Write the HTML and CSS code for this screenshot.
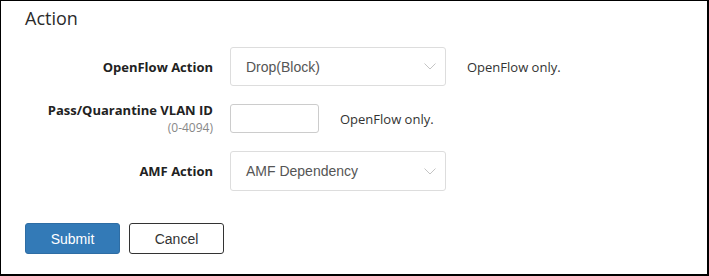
FILE: index.html
```html
<!DOCTYPE html>
<html lang="en">
<head>
    <meta charset="UTF-8">
    <title>Action</title>
    <link rel="stylesheet" href="styles.css">
</head>
<body>
    <div class="panel">
        <h2 class="panel-title">Action</h2>
        <form class="action-form">
            <div class="form-row">
                <label class="form-label">OpenFlow Action</label>
                <div class="select">
                    <span>Drop(Block)</span>
                    <svg class="chevron" width="12" height="7" viewBox="0 0 12 7"><path d="M0.5 0.5 L6 6 L11.5 0.5" fill="none" stroke="#c4c4c4" stroke-width="1"/></svg>
                </div>
                <span class="form-note">OpenFlow only.</span>
            </div>
            <div class="form-row">
                <label class="form-label form-label-hint">Pass/Quarantine VLAN ID<small>(0-4094)</small></label>
                <input type="text" class="text-input">
                <span class="form-note">OpenFlow only.</span>
            </div>
            <div class="form-row">
                <label class="form-label">AMF Action</label>
                <div class="select select-tall">
                    <span>AMF Dependency</span>
                    <svg class="chevron" width="12" height="7" viewBox="0 0 12 7"><path d="M0.5 0.5 L6 6 L11.5 0.5" fill="none" stroke="#c4c4c4" stroke-width="1"/></svg>
                </div>
            </div>
            <div class="buttons">
                <button type="button" class="btn btn-primary">Submit</button>
                <button type="button" class="btn btn-default">Cancel</button>
            </div>
        </form>
    </div>
</body>
</html>
```

FILE: styles.css
```css
body {
    margin: 0;
    font-family: 'Open Sans', 'Liberation Sans', sans-serif;
    background-color: #fff;
    color: #333;
}
.panel {
    width: 709px;
    height: 276px;
    box-sizing: border-box;
    border-style: solid;
    border-color: #000;
    border-width: 1px 2px 2px 1px;
    padding: 5px 24px 0;
}
.panel-title {
    margin: 0;
    font-size: 18px;
    font-weight: normal;
    line-height: 24px;
    color: #2b2b2b;
}
.action-form {
    margin-top: 17px;
    display: flex;
    flex-direction: column;
    gap: 17px;
}
.form-row {
    display: flex;
    align-items: center;
}
.form-label {
    width: 188px;
    margin-right: 17px;
    text-align: right;
    font-size: 13px;
    font-weight: bold;
    color: #222;
    line-height: 18px;
}
.form-label-hint {
    margin-top: -2px;
    margin-bottom: -2px;
}
.form-label small {
    display: block;
    font-size: 12px;
    font-weight: normal;
    color: #888;
    line-height: 17px;
}
.select {
    width: 216px;
    height: 39px;
    box-sizing: border-box;
    border: 1px solid #ddd;
    border-radius: 3px;
    padding: 0 9px 0 15px;
    display: flex;
    align-items: center;
    justify-content: space-between;
    font-family: 'Liberation Sans', Arial, sans-serif;
    font-size: 14px;
    color: #555;
}
.select-tall {
    height: 40px;
}
.text-input {
    width: 89px;
    height: 29px;
    box-sizing: border-box;
    border: 1px solid #ccc;
    border-radius: 3px;
    margin: 0;
    padding: 0 6px;
}
.form-note {
    margin-left: 21px;
    font-size: 13px;
    color: #333;
}
.buttons {
    display: flex;
    gap: 9px;
    margin-top: 15px;
}
.btn {
    width: 95px;
    height: 31px;
    box-sizing: border-box;
    border-radius: 3px;
    font-family: 'Liberation Sans', Arial, sans-serif;
    font-size: 14px;
    padding: 0;
    margin: 0;
    cursor: pointer;
}
.btn-primary {
    background-color: #337ab7;
    border: 1px solid #2e6da4;
    color: #fff;
}
.btn-default {
    background-color: #fff;
    border: 1px solid #333;
    color: #333;
}
```
